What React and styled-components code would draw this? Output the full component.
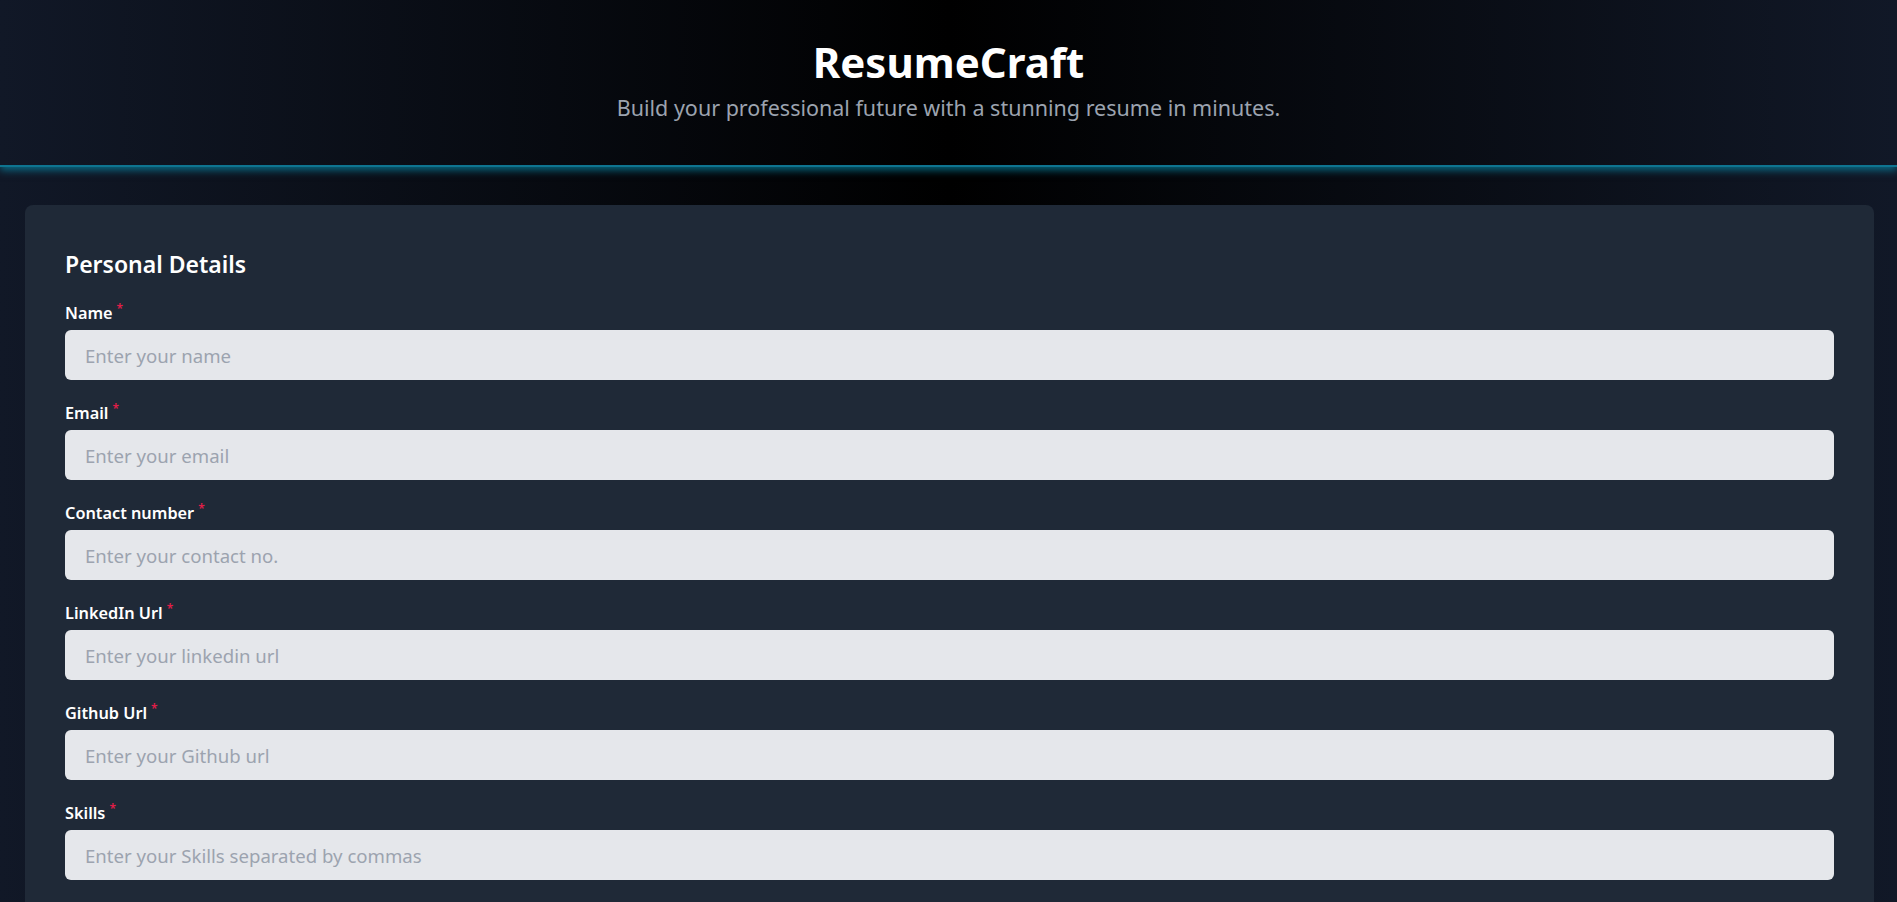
import styled, { createGlobalStyle } from "styled-components";

const GlobalStyle = createGlobalStyle`
  body {
    margin: 0;
    font-family: "Noto Sans", "Open Sans", sans-serif;
    background: linear-gradient(to right, #111827, #000000, #111827);
    min-height: 100vh;
  }
`;

const Page = styled.div`
  min-height: 100vh;
`;

const Header = styled.header`
  height: 167px;
  box-sizing: border-box;
  padding-top: 38px;
  text-align: center;
  border-bottom: 2px solid #0e7490;
  box-shadow: 0 3px 8px rgba(8, 145, 178, 0.7);
`;

const Title = styled.h1`
  margin: 0;
  font-size: 42px;
  line-height: 48px;
  font-weight: 700;
  color: #ffffff;
`;

const Subtitle = styled.p`
  margin: 8px 0 0;
  font-size: 21.5px;
  line-height: 28px;
  color: #9ca3af;
`;

const Main = styled.main`
  padding: 38px 23px 40px 25px;
`;

const Card = styled.section`
  background: #1f2937;
  border-radius: 8px;
  padding: 43px 40px 40px;
`;

const SectionTitle = styled.h2`
  margin: 0 0 20px;
  font-size: 23px;
  line-height: 32px;
  font-weight: 600;
  color: #ffffff;
`;

const Fields = styled.div`
  display: flex;
  flex-direction: column;
  gap: 20px;
`;

const Field = styled.div`
  display: flex;
  flex-direction: column;
`;

const Label = styled.label`
  font-size: 16.3px;
  line-height: 26px;
  font-weight: 600;
  color: #ffffff;
  margin-bottom: 4px;
`;

const Required = styled.sup`
  color: #e11d48;
  font-size: 12px;
  margin-left: 4px;
  line-height: 0;
`;

const Input = styled.input`
  height: 50px;
  box-sizing: border-box;
  border: none;
  outline: none;
  border-radius: 6px;
  background: #e5e7eb;
  padding: 0 20px;
  font-family: inherit;
  font-size: 18.6px;
  color: #111827;

  &::placeholder {
    color: #9ca3af;
  }
`;

const fields = [
  { label: "Name", placeholder: "Enter your name" },
  { label: "Email", placeholder: "Enter your email" },
  { label: "Contact number", placeholder: "Enter your contact no." },
  { label: "LinkedIn Url", placeholder: "Enter your linkedin url" },
  { label: "Github Url", placeholder: "Enter your Github url" },
  { label: "Skills", placeholder: "Enter your Skills separated by commas" },
];

export default function App() {
  return (
    <Page>
      <GlobalStyle />
      <Header>
        <Title>ResumeCraft</Title>
        <Subtitle>Build your professional future with a stunning resume in minutes.</Subtitle>
      </Header>
      <Main>
        <Card>
          <SectionTitle>Personal Details</SectionTitle>
          <Fields>
            {fields.map((f) => (
              <Field key={f.label}>
                <Label>
                  {f.label}
                  <Required>*</Required>
                </Label>
                <Input type="text" placeholder={f.placeholder} />
              </Field>
            ))}
          </Fields>
        </Card>
      </Main>
    </Page>
  );
}
